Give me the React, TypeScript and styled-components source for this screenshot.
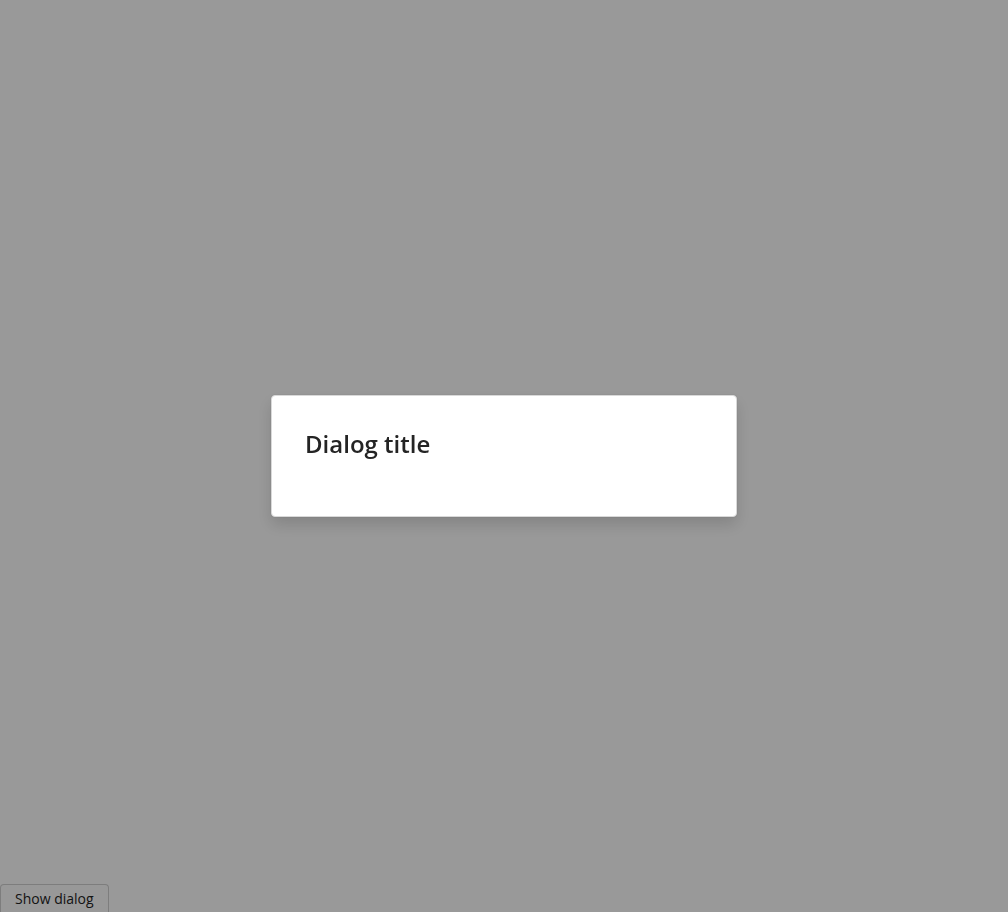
import React, { useState } from 'react';
import styled, { createGlobalStyle } from 'styled-components';

const GlobalStyle = createGlobalStyle`
  html, body {
    margin: 0;
    padding: 0;
    background: #ffffff;
    font-family: 'Open Sans', 'Liberation Sans', sans-serif;
  }
`;

const App = () => {
  const [open, setOpen] = useState(true);

  return (
    <>
      <GlobalStyle />
      <Page>
        <ShowButton onClick={() => setOpen(true)}>Show dialog</ShowButton>
      </Page>
      {open && (
        <Overlay onClick={() => setOpen(false)}>
          <Dialog role="dialog" aria-modal="true" onClick={(e) => e.stopPropagation()}>
            <Title>Dialog title</Title>
          </Dialog>
        </Overlay>
      )}
    </>
  );
};

export default App;

const Page = styled.div`
  min-height: 100vh;
  display: flex;
  flex-direction: column;
  justify-content: flex-end;
  align-items: flex-start;
`;

const ShowButton = styled.button`
  height: 28px;
  padding: 0 14px;
  margin: 0;
  border: 1px solid #d1d1d1;
  border-bottom: none;
  border-radius: 4px 4px 0 0;
  background: #fdfdfd;
  color: #242424;
  font-family: 'Open Sans', 'Liberation Sans', sans-serif;
  font-size: 14px;
  cursor: pointer;
`;

const Overlay = styled.div`
  position: fixed;
  inset: 0;
  background: rgba(0, 0, 0, 0.4);
  display: flex;
  align-items: center;
  justify-content: center;
`;

const Dialog = styled.div`
  width: 466px;
  box-sizing: border-box;
  padding: 32px 33px 56px;
  background: #ffffff;
  border: 1px solid #d9d9d9;
  border-radius: 4px;
  box-shadow: 0 8px 16px rgba(0, 0, 0, 0.14), 0 0 2px rgba(0, 0, 0, 0.12);
`;

const Title = styled.h2`
  margin: 0;
  font-family: 'Open Sans', 'Liberation Sans', sans-serif;
  font-size: 24px;
  line-height: 32px;
  font-weight: 600;
  color: #242424;
`;
